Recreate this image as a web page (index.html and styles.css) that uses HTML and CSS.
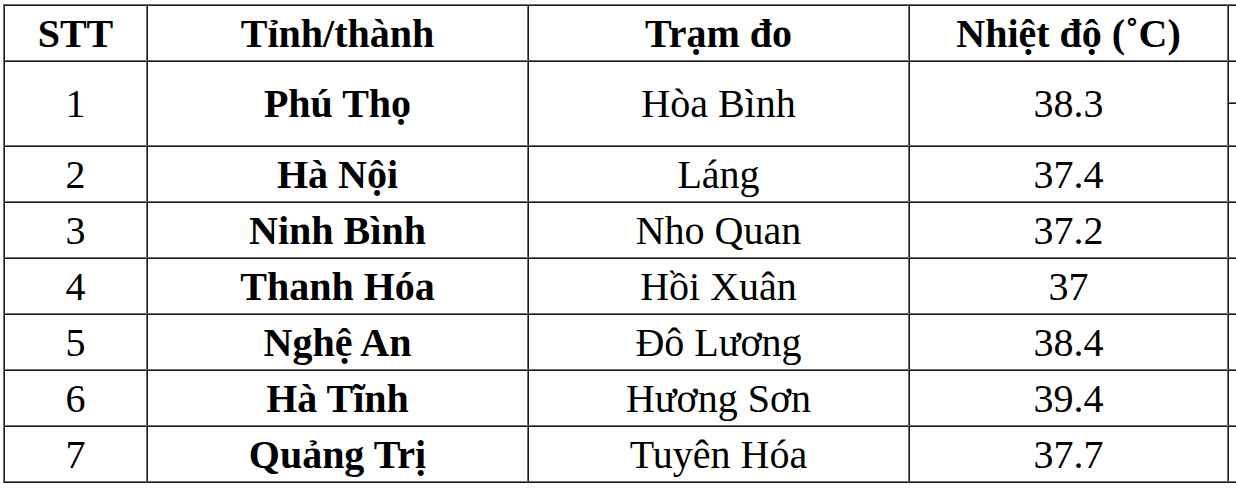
FILE: index.html
```html
<!DOCTYPE html>
<html lang="vi">
<head>
<meta charset="utf-8">
<title>Nhiệt độ</title>
<link rel="stylesheet" href="styles.css">
</head>
<body>
<table class="temps">
  <colgroup>
    <col class="c-stt">
    <col class="c-prov">
    <col class="c-station">
    <col class="c-temp">
    <col class="c-extra">
  </colgroup>
  <thead>
    <tr class="r-head">
      <th>STT</th>
      <th>Tỉnh/thành</th>
      <th>Trạm đo</th>
      <th>Nhiệt độ (˚C)</th>
      <th></th>
    </tr>
  </thead>
  <tbody>
    <tr class="r-1a">
      <td rowspan="2">1</td>
      <td rowspan="2" class="prov">Phú Thọ</td>
      <td rowspan="2">Hòa Bình</td>
      <td rowspan="2">38.3</td>
      <td></td>
    </tr>
    <tr class="r-1b"><td></td></tr>
    <tr class="r"><td>2</td><td class="prov">Hà Nội</td><td>Láng</td><td>37.4</td><td></td></tr>
    <tr class="r"><td>3</td><td class="prov">Ninh Bình</td><td>Nho Quan</td><td>37.2</td><td></td></tr>
    <tr class="r"><td>4</td><td class="prov">Thanh Hóa</td><td>Hồi Xuân</td><td>37</td><td></td></tr>
    <tr class="r"><td>5</td><td class="prov">Nghệ An</td><td>Đô Lương</td><td>38.4</td><td></td></tr>
    <tr class="r"><td>6</td><td class="prov">Hà Tĩnh</td><td>Hương Sơn</td><td>39.4</td><td></td></tr>
    <tr class="r"><td>7</td><td class="prov">Quảng Trị</td><td>Tuyên Hóa</td><td>37.7</td><td></td></tr>
  </tbody>
</table>
</body>
</html>
```

FILE: styles.css
```css
html, body {
  margin: 0;
  padding: 0;
  background: #fff;
  overflow: hidden;
}

body {
  width: 1236px;
  height: 492px;
}

.temps {
  margin: 4px 0 0 3px;
  table-layout: fixed;
  width: 1286px;
  border-collapse: separate;
  border-spacing: 0;
  border-top: 1px solid #6e6e6e;
  border-left: 1px solid #6e6e6e;
  border-right: 1px solid #1c1c1c;
  border-bottom: 1px solid #1c1c1c;
  font-family: "Liberation Serif", "Times New Roman", serif;
  font-size: 40px;
  color: #000;
}

.c-stt { width: 143px; }
.c-prov { width: 381px; }
.c-station { width: 381px; }
.c-temp { width: 319px; }
.c-extra { width: 60px; }

.temps th,
.temps td {
  padding: 0;
  text-align: center;
  vertical-align: middle;
  border-top: 1px solid #1c1c1c;
  border-left: 1px solid #1c1c1c;
  border-right: 1px solid #6e6e6e;
  border-bottom: 1px solid #6e6e6e;
  white-space: nowrap;
}

.temps th {
  font-weight: bold;
}

.temps .prov {
  font-weight: bold;
}

.r-head { height: 56px; }
.r-1a { height: 42px; }
.r-1b { height: 43px; }
.r { height: 56px; }
```
